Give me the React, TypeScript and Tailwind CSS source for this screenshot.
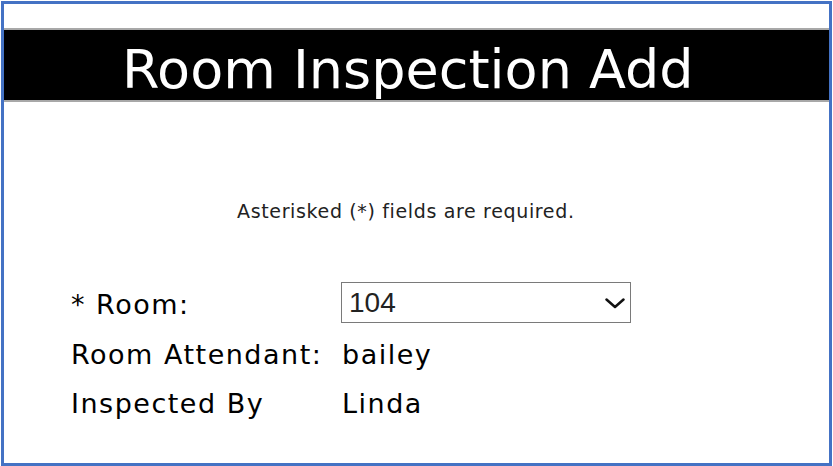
import React from "react";

export default function App() {
  return (
    <div className="w-[833px] h-[466px] bg-white pl-px pt-px">
      <div
        className="w-[831px] h-[465px] border-[3px] border-[#4472c4] flex flex-col"
        style={{ fontFamily: '"DejaVu Sans", Verdana, sans-serif' }}
      >
        <div className="mt-[24px] h-[74px] bg-black border-y-2 border-[#a8a8a8] flex items-center pl-[118px] pt-[9px]">
          <h1 className="text-[54px] leading-none text-white">Room Inspection Add</h1>
        </div>

        <p className="mt-[100px] pl-[233px] text-[19px] leading-none tracking-[0.65px] text-[#222]">
          Asterisked (*) fields are required.
        </p>

        <div className="mt-[61px] pl-[67px] text-[27px] leading-none tracking-[1.5px] text-black">
          <div className="grid grid-cols-[270px_1fr] items-start">
            <div className="pt-[9px]">* Room:</div>
            <div className="w-[290px] h-[41px] border border-[#7a7a7a] bg-white flex items-center justify-between pl-[7px] pr-[5px] tracking-normal">
              <span
                className="text-[28px] leading-none text-[#222]"
                style={{ fontFamily: '"Liberation Sans", Arial, sans-serif' }}
              >
                104
              </span>
              <svg width="20" height="11" viewBox="0 0 20 11" className="mt-px">
                <polyline
                  points="1.5,1.5 10,9 18.5,1.5"
                  fill="none"
                  stroke="#111"
                  strokeWidth="2.5"
                  strokeLinecap="round"
                  strokeLinejoin="round"
                />
              </svg>
            </div>
          </div>
          <div className="grid grid-cols-[271px_1fr] mt-[18px]">
            <div>Room Attendant:</div>
            <div>bailey</div>
          </div>
          <div className="grid grid-cols-[271px_1fr] mt-[22px]">
            <div>Inspected By</div>
            <div>Linda</div>
          </div>
        </div>
      </div>
    </div>
  );
}
